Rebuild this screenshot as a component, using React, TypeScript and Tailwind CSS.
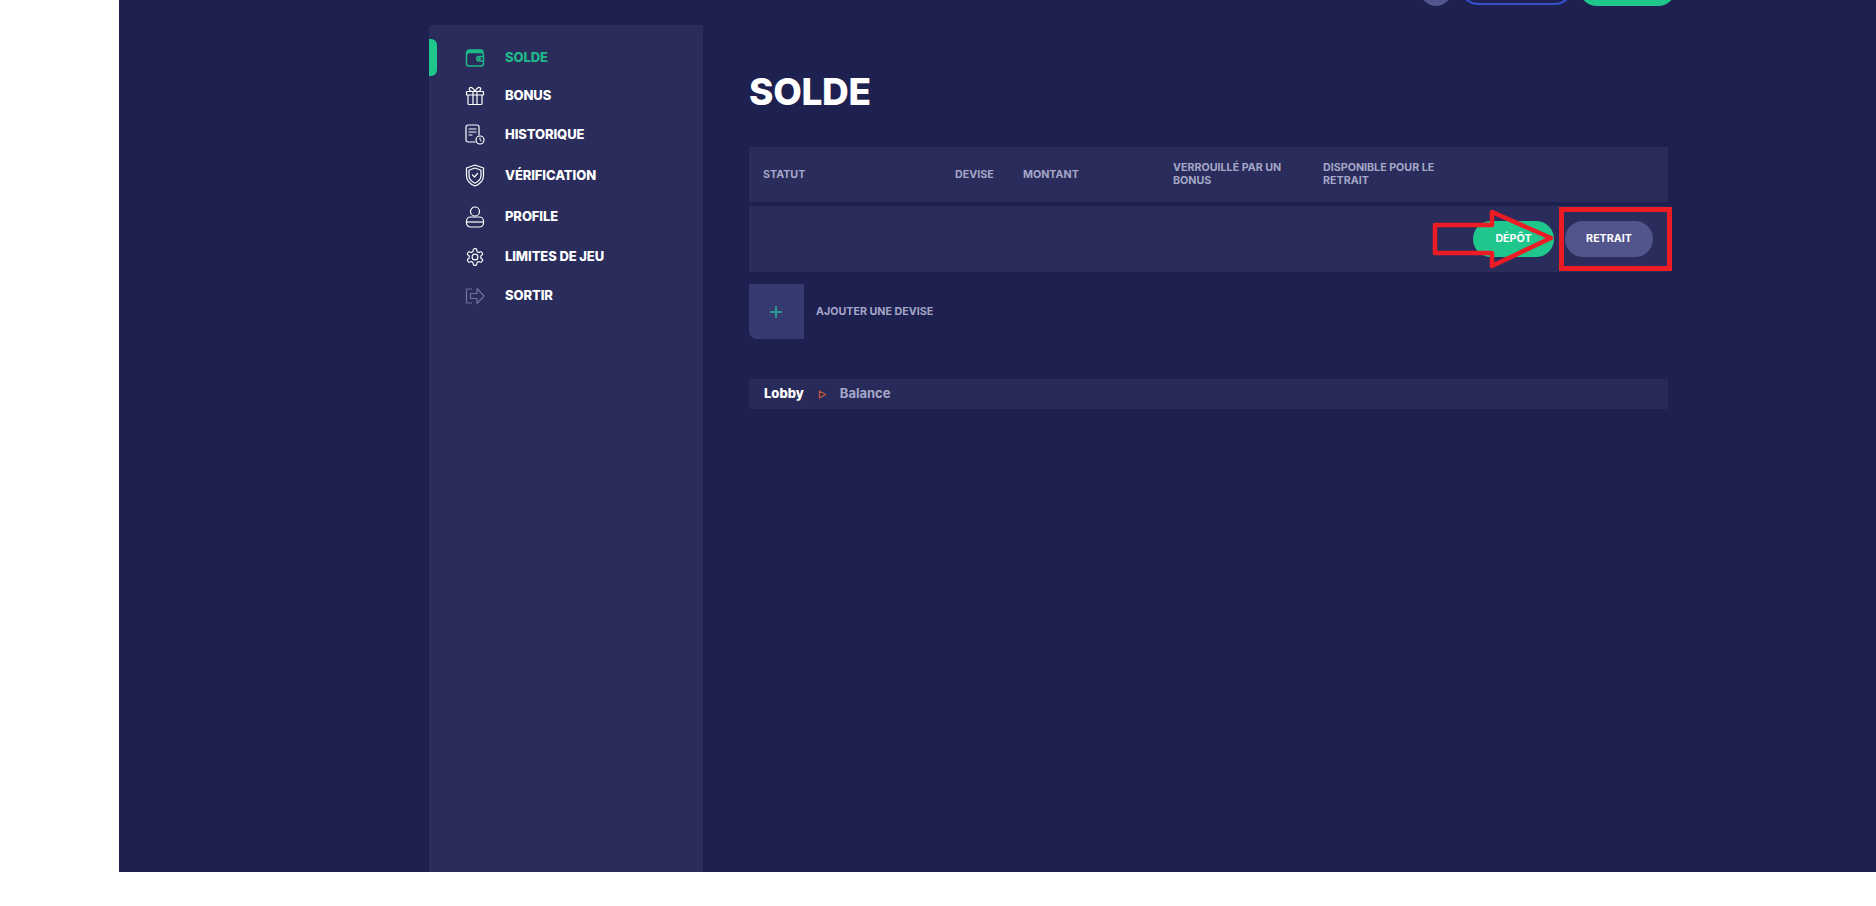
import React from 'react';

const font = { fontFamily: '"Inter", "Liberation Sans", sans-serif' };

const WalletIcon = () => (
  <svg width="20" height="20" viewBox="0 0 20 20" fill="none" stroke="currentColor" strokeWidth="1.5" strokeLinejoin="round">
    <path d="M1.5 6c0-2.500 1-4 3-4h11c1.500 0 2.500 .8 2.500 2.500" fill="currentColor" />
    <rect x="1.500" y="4.500" width="17" height="13.500" rx="2.500" fill="#2a2d5b" />
    <path d="M18.500 8.500h-4.500a2 2 0 0 0 0 4.500h4.500" />
    <circle cx="14.500" cy="10.700" r=".7" fill="currentColor" />
  </svg>
);

const GiftIcon = () => (
  <svg width="20" height="20" viewBox="0 0 20 20" fill="none" stroke="currentColor" strokeWidth="1.2" strokeLinejoin="round">
    <rect x="1.500" y="5.500" width="17" height="3.500" rx=".6" />
    <path d="M3 9v8.500a1 1 0 0 0 1 1h12a1 1 0 0 0 1-1V9M8 5.500v13M12 5.500v13" />
    <path d="M10 5.500C8.500 2 6 .8 4.800 1.800 3.600 2.800 4.500 5.500 7 5.500M10 5.500c1.500-3.500 4-4.700 5.200-3.700 1.200 1 .3 3.700-2.200 3.700" />
  </svg>
);

const HistoryIcon = () => (
  <svg width="20" height="22" viewBox="0 0 20 22" fill="none" stroke="currentColor" strokeWidth="1.2" strokeLinecap="round">
    <path d="M10 18H3a2 2 0 0 1-2-2V3a2 2 0 0 1 2-2h9a2 2 0 0 1 2 2v8" />
    <path d="M4 5h7M4 8h7M4 11h3" />
    <circle cx="15" cy="16" r="4" />
    <path d="M15 14v2l1.300 1" strokeWidth="1" />
  </svg>
);

const ShieldIcon = () => (
  <svg width="20" height="23" viewBox="0 0 20 23" fill="none" stroke="currentColor" strokeWidth="1.2" strokeLinecap="round" strokeLinejoin="round">
    <path d="M10 1l8.500 3v7.500c0 4.500-3.500 8.500-8.500 10.500-5-2-8.500-6-8.500-10.500V4z" />
    <path d="M10 4l6 2.200v5.300c0 3.300-2.500 6-6 7.700-3.500-1.700-6-4.400-6-7.700V6.200z" />
    <path d="M7.500 11l2 2 3-3.500" />
  </svg>
);

const ProfileIcon = () => (
  <svg width="20" height="22" viewBox="0 0 20 22" fill="none" stroke="currentColor" strokeWidth="1.2">
    <circle cx="10" cy="5.500" r="4.500" />
    <rect x="1.500" y="11" width="17" height="10" rx="4" />
    <path d="M1.500 16h17" />
  </svg>
);

const GearIcon = () => (
  <svg width="20" height="20" viewBox="0 0 24 24" fill="none" stroke="currentColor" strokeWidth="1.400" strokeLinecap="round" strokeLinejoin="round">
    <path d="M12.220 2h-.44a2 2 0 0 0-2 2v.18a2 2 0 0 1-1 1.730l-.43.250a2 2 0 0 1-2 0l-.15-.080a2 2 0 0 0-2.730.730l-.22.380a2 2 0 0 0 .730 2.730l.15.100a2 2 0 0 1 1 1.720v.510a2 2 0 0 1-1 1.740l-.15.090a2 2 0 0 0-.730 2.730l.22.380a2 2 0 0 0 2.730.730l.15-.080a2 2 0 0 1 2 0l.43.250a2 2 0 0 1 1 1.730V20a2 2 0 0 0 2 2h.44a2 2 0 0 0 2-2v-.18a2 2 0 0 1 1-1.730l.43-.250a2 2 0 0 1 2 0l.15.080a2 2 0 0 0 2.730-.730l.22-.390a2 2 0 0 0-.730-2.730l-.15-.080a2 2 0 0 1-1-1.740v-.500a2 2 0 0 1 1-1.740l.15-.090a2 2 0 0 0 .730-2.730l-.22-.380a2 2 0 0 0-2.730-.730l-.15.080a2 2 0 0 1-2 0l-.43-.250a2 2 0 0 1-1-1.730V4a2 2 0 0 0-2-2z" />
    <circle cx="12" cy="12" r="3.500" />
  </svg>
);

const ExitIcon = () => (
  <svg width="20" height="18" viewBox="0 0 20 18" fill="none" stroke="currentColor" strokeWidth="1.200" strokeLinejoin="round">
    <path d="M7 2H1.500v14H7" />
    <path d="M5.500 6.500H12V1.500L19 9l-7 7.500v-5H5.500z" />
  </svg>
);

const menu = [
  { label: 'SOLDE', icon: <WalletIcon />, cls: 'h-[38px] text-[#1fb98a]', iconCls: '' },
  { label: 'BONUS', icon: <GiftIcon />, cls: 'h-[38px] text-white', iconCls: '' },
  { label: 'HISTORIQUE', icon: <HistoryIcon />, cls: 'h-[40px] text-white', iconCls: '' },
  { label: 'VÉRIFICATION', icon: <ShieldIcon />, cls: 'h-[41px] text-white', iconCls: '' },
  { label: 'PROFILE', icon: <ProfileIcon />, cls: 'h-[41px] text-white', iconCls: '' },
  { label: 'LIMITES DE JEU', icon: <GearIcon />, cls: 'h-[40px] text-white', iconCls: '' },
  { label: 'SORTIR', icon: <ExitIcon />, cls: 'h-[38px] text-white', iconCls: 'text-[#6d70a0]' },
];

const Sidebar = () => (
  <aside className="relative w-[274px] h-[847px] shrink-0 bg-[#2a2d5b] pt-[14px]">
    <div className="absolute left-0 top-[14px] w-2 h-[37px] rounded-r-md bg-[#1fc78d]" />
    <nav className="flex flex-col">
      {menu.map((item) => (
        <div key={item.label} className={`flex items-center pl-[36px] ${item.cls}`}>
          <span className={`w-[20px] flex justify-center ${item.iconCls}`}>{item.icon}</span>
          <span className="ml-[20px] text-[13px] font-extrabold tracking-[-0.1px]">{item.label}</span>
        </div>
      ))}
    </nav>
  </aside>
);

const thCls = 'text-[10.7px] font-bold leading-[13px] text-[#a5a7c9]';

const App: React.FC = () => {
  return (
    <div className="w-[1876px] h-[906px] bg-white overflow-hidden" style={font}>
      <div className="ml-[119px] h-[872px] bg-[#1e2050]">
        <header className="h-[6px] overflow-hidden flex items-end justify-end pr-[200px]">
          <div className="w-[32px] h-[32px] shrink-0 rounded-full bg-[#52558c]" />
          <div className="ml-[8px] w-[113px] h-[36px] shrink-0 rounded-full border-2 border-[#3550c8] mb-px" />
          <div className="ml-[6px] w-[97px] h-[36px] shrink-0 rounded-full bg-[#1fc78d]" />
        </header>

        <div className="flex ml-[310px] mt-[19px]">
          <Sidebar />

          <main className="ml-[46px] w-[919px]">
            <h1 className="mt-[46px] h-[76px] text-[37px] leading-[42px] font-extrabold text-white tracking-[-0.3px]">SOLDE</h1>

            <div className="grid grid-cols-[192px_68px_150px_150px_170px_1fr] items-center h-[55px] pl-[14px] bg-[#2a2d5b]">
              <div className={thCls}>STATUT</div>
              <div className={thCls}>DEVISE</div>
              <div className={thCls}>MONTANT</div>
              <div className={`${thCls} pr-4 pb-px`}>VERROUILLÉ PAR UN BONUS</div>
              <div className={`${thCls} pr-[40px] pb-px`}>DISPONIBLE POUR LE RETRAIT</div>
              <div />
            </div>

            <div className="relative mt-[4px] h-[66px] bg-[#2a2d5b] flex items-center justify-end pr-[15px] gap-[11px]">
              <button className="w-[81px] h-[36px] rounded-full bg-[#1fc78d] text-white text-[10.7px] font-bold">DÉPÔT</button>
              <button className="w-[88px] h-[36px] rounded-full bg-[#52558c] text-white text-[10.7px] font-bold">RETRAIT</button>

              {/* red annotations drawn on top of the screenshot */}
              <svg className="absolute left-[680px] top-0 overflow-visible" width="245" height="66" fill="none" stroke="#ed1c24" strokeWidth="4.500">
                <path d="M6 19h57V6l59 26-59 28V47H6z" strokeLinejoin="round" />
                <rect x="132.500" y="3.500" width="108" height="59" strokeWidth="5" />
              </svg>
            </div>

            <div className="flex items-center mt-[12px]">
              <div className="w-[55px] h-[55px] bg-[#363a6e] rounded-bl-lg flex items-center justify-center pr-[2px]">
                <svg width="14" height="14" viewBox="0 0 14 14" stroke="#2bb596" strokeWidth="1.500">
                  <path d="M7 1v12M1 7h12" />
                </svg>
              </div>
              <span className="ml-[12px] mt-px text-[10.7px] font-bold text-[#a5a7c9]">AJOUTER UNE DEVISE</span>
            </div>

            <div className="flex items-center mt-[40px] h-[30px] bg-[#282b59] pl-[15px]">
              <span className="text-[13px] font-extrabold text-white">Lobby</span>
              <svg className="ml-[14px]" width="9" height="9" viewBox="0 0 9 9" fill="none" stroke="#c8583a" strokeWidth="1.200">
                <path d="M1.500 1v7l6-3.500z" strokeLinejoin="round" />
              </svg>
              <span className="ml-[13px] text-[13px] font-bold text-[#a5a7c9]">Balance</span>
            </div>
          </main>
        </div>
      </div>
    </div>
  );
};

export default App;
